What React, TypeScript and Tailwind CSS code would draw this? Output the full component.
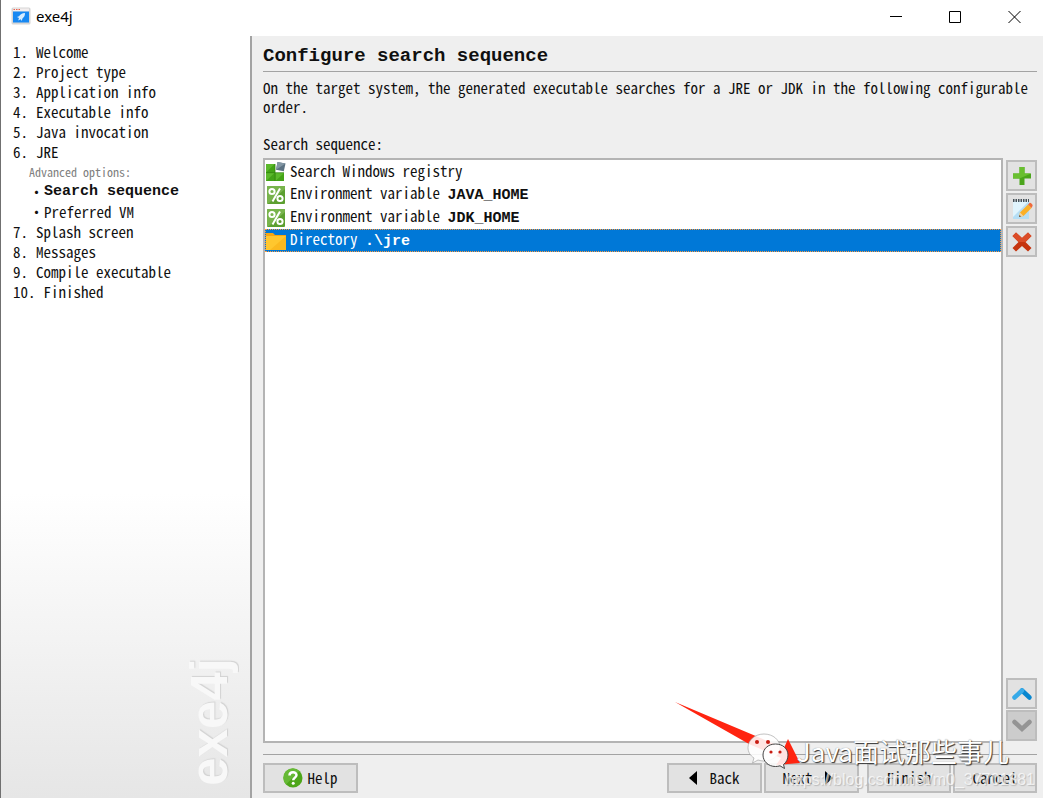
import type { ReactNode } from "react";

const bold = "font-['Liberation_Mono',monospace] font-bold";

const steps = [
  "Welcome",
  "Project type",
  "Application info",
  "Executable info",
  "Java invocation",
  "JRE",
  "Splash screen",
  "Messages",
  "Compile executable",
  "Finished",
];

function AppIcon() {
  return (
    <svg viewBox="0 0 20 18" className="h-[18px] w-5" aria-hidden="true">
      <rect x="0.5" y="0.5" width="19" height="17" rx="1.5" fill="#d6d6d6" />
      <rect x="2" y="1.500" width="16" height="3" fill="#f3eeee" />
      <path d="M2.500 2.500h1.500M5 2.500h1.500M7.500 2.500h1.500" stroke="#e8604c" strokeWidth="1.200" />
      <rect x="2" y="4.500" width="16" height="11" fill="#1788f2" />
      <path d="M14 6c-3 .2-4.700 1.200-6 3.300l-2 .7 2 1-.8 2.500 2.500-1.200 1 1.700.8-2.500c1.800-1.500 2.500-3 2.500-5.500z" fill="#d5ecff" />
    </svg>
  );
}

function RegistryIcon() {
  return (
    <svg viewBox="0 0 20 20" className="size-5" aria-hidden="true">
      <path d="M0 2h9v9h9v8H0z" fill="#43a317" />
      <path d="M0 2h8.500L0 10.500zM0 11h8.500L0 19zM9.500 11H18l-8.500 8z" fill="#5cb92c" />
      <path d="M9 2v17M0 10.700h18" stroke="#32850f" strokeWidth="0.800" />
      <path d="M11.500 0l8 1.500-1.700 7.800-7.800-1.600z" fill="#5c7282" />
      <path d="M11.500 0l8 1.500-9.500 6.200z" fill="#8296a4" />
    </svg>
  );
}

function PercentIcon() {
  return (
    <svg viewBox="0 0 20 20" className="size-5" aria-hidden="true">
      <rect x="1" y="1" width="18" height="18" rx="1" fill="#5c9f30" />
      <path d="M2 1h17v3L3 18H1V2z" fill="#78b44c" />
      <circle cx="6" cy="6.500" r="2.600" fill="none" stroke="#fff" strokeWidth="2" />
      <circle cx="14" cy="13.500" r="2.600" fill="none" stroke="#fff" strokeWidth="2" />
      <path d="M14 3.500L6.500 16.500" stroke="#fff" strokeWidth="2" />
    </svg>
  );
}

function FolderIcon() {
  return (
    <svg viewBox="0 0 20 20" className="size-5" aria-hidden="true">
      <path d="M0 2h7l2 2h11v15H0z" fill="#f5a612" />
      <path d="M0 5h20v14H0z" fill="#ffc72e" />
      <path d="M20 5v14H4z" fill="#fbb91f" />
    </svg>
  );
}

function PlusIcon() {
  return (
    <svg viewBox="0 0 20 20" className="size-5" aria-hidden="true">
      <path d="M7.500 1h5v6.500H19v5h-6.500V19h-5v-6.500H1v-5h6.500z" fill="#4ba51c" />
      <path d="M7.500 1h5v6.500H19L7.500 12.500H1v-5h6.500z" fill="#69bf30" />
    </svg>
  );
}

function EditIcon() {
  return (
    <svg viewBox="0 0 22 22" className="size-[22px]" aria-hidden="true">
      <path d="M2 3h16v18H2z" fill="#b5def5" />
      <path d="M2 3h16L2 19z" fill="#e0f4fd" />
      <path d="M2 2.500h16" stroke="#46525a" strokeWidth="3" strokeDasharray="1.500 1" />
      <path d="M8 19l1-4.500L17 6.500l3.500 3.500-8 8z" fill="#fbb028" />
      <path d="M8 19l1-4.500 3.500 3.500z" fill="#f2d4a4" />
      <path d="M17 6.500l1.500-1.500c1-.8 3.800 1.800 3 3L20.500 10z" fill="#ef6a3c" />
      <path d="M8 19l.5-2 1.500 1.500z" fill="#4b4038" />
    </svg>
  );
}

function DeleteIcon() {
  return (
    <svg viewBox="0 0 22 22" className="size-[22px]" aria-hidden="true">
      <path d="M5 1.500l6 5.500 6-5.500L20.500 5l-6 6 6 6-3.500 3.500-6-5.500-6 5.500L1.500 17l6-6-6-6z" fill="#c5340f" />
      <path d="M5 1.500l6 5.500 6-5.500L20.500 5l-6 6H7.500l-6-6z" fill="#db4c27" />
    </svg>
  );
}

function ChevronUp() {
  return (
    <svg viewBox="0 0 22 14" className="h-3.5 w-[22px]" aria-hidden="true">
      <path d="M11 3.500l7.500 7" stroke="#0786cf" strokeWidth="4.500" strokeLinecap="round" />
      <path d="M3.500 10.500l7.500-7" stroke="#37aae8" strokeWidth="4.500" strokeLinecap="round" />
    </svg>
  );
}

function ChevronDown() {
  return (
    <svg viewBox="0 0 22 14" className="h-3.5 w-[22px]" aria-hidden="true">
      <path d="M3.500 3l7.500 7 7.500-7" stroke="#949494" strokeWidth="4.500" strokeLinecap="round" fill="none" />
    </svg>
  );
}

function HelpIcon() {
  return (
    <svg viewBox="0 0 20 20" className="size-5" aria-hidden="true">
      <circle cx="10" cy="10" r="9.500" fill="#4da619" />
      <path d="M3 16.500A9.500 9.500 0 0 1 16.500 3z" fill="#66b935" />
      <path d="M6.500 7.500c0-4.500 7-4.300 7-.4 0 2.400-3.300 2.700-3.300 5.200" stroke="#fff" strokeWidth="2.500" fill="none" />
      <circle cx="10.200" cy="15.300" r="1.500" fill="#fff" />
    </svg>
  );
}

function ToolButton({ label, disabled, children }: { label: string; disabled?: boolean; children: ReactNode }) {
  return (
    <button
      aria-label={label}
      disabled={disabled}
      className="flex size-[31px] items-center justify-center border-2 border-[#bdbdbd] bg-[#e2e2e2] disabled:bg-[#cccccc]"
    >
      {children}
    </button>
  );
}

function FooterButton({ width, children }: { width: string; children: ReactNode }) {
  return (
    <button className={`flex h-[30px] items-center justify-center border-2 border-[#bdbdbd] bg-[#e2e2e2] ${width}`}>
      {children}
    </button>
  );
}

function Step({ index }: { index: number }) {
  return (
    <li>
      <a href="#" className="flex gap-2">
        <span>{index + 1}.</span>
        <span>{steps[index]}</span>
      </a>
    </li>
  );
}

function Sidebar() {
  return (
    <nav
      aria-label="Wizard steps"
      className="relative w-[251px] shrink-0 border-r-2 border-[#a3a3a3] bg-linear-to-b from-white from-60% to-[#e6e6e6] pt-1.5 pl-3"
    >
      <ol className="leading-5">
        {[0, 1, 2, 3, 4, 5].map((i) => (
          <Step key={i} index={i} />
        ))}
        <li className="pl-4">
          <p className="text-[12px] leading-5 text-[#808080]">Advanced options:</p>
          <ul>
            <li>
              <a href="#" aria-current="step" className="flex">
                <span>·</span>
                <span className={bold}>Search sequence</span>
              </a>
            </li>
            <li>
              <a href="#" className="flex">
                <span>·</span>
                <span>Preferred VM</span>
              </a>
            </li>
          </ul>
        </li>
        {[6, 7, 8, 9].map((i) => (
          <Step key={i} index={i} />
        ))}
      </ol>
      <span className="absolute right-4 bottom-3 rotate-180 font-['Liberation_Sans',sans-serif] text-[51px] leading-[48px] font-bold text-[#f8f8f8] [text-shadow:1px_1px_1px_#d2d2d2] [writing-mode:vertical-rl]">
        exe4j
      </span>
    </nav>
  );
}

function SearchList() {
  return (
    <ul
      role="listbox"
      aria-labelledby="sequence-label"
      className="flex-1 border-2 border-[#b4b4b4] bg-white"
    >
      <li role="option" aria-selected="false" className="flex h-[23px] items-center gap-1 pl-px">
        <RegistryIcon />
        <span>Search Windows registry</span>
      </li>
      <li role="option" aria-selected="false" className="flex h-[23px] items-center gap-1 pl-px">
        <PercentIcon />
        <span>
          Environment variable <b className={bold}>JAVA_HOME</b>
        </span>
      </li>
      <li role="option" aria-selected="false" className="flex h-[23px] items-center gap-1 pl-px">
        <PercentIcon />
        <span>
          Environment variable <b className={bold}>JDK_HOME</b>
        </span>
      </li>
      <li
        role="option"
        aria-selected="true"
        className="flex h-[23px] items-center gap-1 border border-dotted border-[#ff9a3c] bg-[#0078d7] text-white"
      >
        <FolderIcon />
        <span>
          Directory <b className={bold}>.\jre</b>
        </span>
      </li>
    </ul>
  );
}

function Watermark() {
  return (
    <div className="pointer-events-none absolute inset-0 overflow-hidden">
      <svg viewBox="0 0 130 66" className="absolute right-[239px] bottom-[30px] h-[66px] w-[130px]" aria-hidden="true">
        <path d="M1 0L110 46l4-9 12 24-24 2 5-7L75 42z" fill="#ff2410" />
      </svg>
      <svg viewBox="0 0 44 38" className="absolute right-[252px] bottom-[28px] h-[38px] w-11" aria-hidden="true">
        <path
          d="M17 2C8 2 1 8 1 15.500c0 4.500 2.200 8 6 10.500l-1.500 5 5.500-3c2 .7 4 1 6 1 9 0 16-6 16-13.500S26 2 17 2z"
          fill="#fff"
          fillOpacity="0.880"
          stroke="#999"
          strokeWidth="0.600"
        />
        <path
          d="M28.500 12C21 12 16 17 16 23s5 11.500 12.500 11.500c1.500 0 3-.2 4.500-.7l4.500 2.700-1-4c2.800-2 4.500-5.500 4.500-9.500 0-6-5-11-12.500-11z"
          fill="#fff"
          fillOpacity="0.880"
          stroke="#444"
          strokeWidth="1"
        />
        <g fill="#c81c12">
          <circle cx="10" cy="10" r="2" />
          <circle cx="21" cy="10" r="2" />
          <circle cx="24" cy="20" r="1.600" />
          <circle cx="33" cy="20" r="1.600" />
        </g>
      </svg>
      <span className="absolute right-[34px] bottom-[27px] font-['Noto_Sans_CJK_SC',sans-serif] text-[26px] leading-10 whitespace-nowrap text-white [text-shadow:1px_1px_1px_#333,0_0_1px_#777]">
        Java面试那些事儿
      </span>
      <span className="absolute right-2 bottom-2 font-['Liberation_Sans',sans-serif] text-base leading-5 whitespace-nowrap text-white/70 [text-shadow:1px_1px_1px_#bbb]">
        https://blog.csdn.net/m0_37701381
      </span>
    </div>
  );
}

export default function App() {
  return (
    <div className="relative flex min-h-screen flex-col border-l border-[#707070] bg-[#efefef] font-['Noto_Sans_Mono_CJK_SC','Liberation_Mono',monospace] text-[15px] text-[#101010]">
      <header className="flex h-9 items-center justify-between bg-white pr-[22px] pb-1 pl-2.5">
        <div className="flex items-center gap-[5px] font-['Noto_Sans',sans-serif] text-[15px] text-black">
          <AppIcon />
          <h1>exe4j</h1>
        </div>
        <div className="flex gap-[46px]">
          <button aria-label="Minimize">
            <svg viewBox="0 0 13 13" className="size-[13px]" aria-hidden="true">
              <path d="M0 6.500h12" stroke="#000" />
            </svg>
          </button>
          <button aria-label="Maximize">
            <svg viewBox="0 0 13 13" className="size-[13px]" aria-hidden="true">
              <path d="M.5 1.500h11v11H.5z" stroke="#000" fill="none" />
            </svg>
          </button>
          <button aria-label="Close">
            <svg viewBox="0 0 13 13" className="size-[13px]" aria-hidden="true">
              <path d="M.5 1l12 12M12.500 1l-12 12" stroke="#000" />
            </svg>
          </button>
        </div>
      </header>

      <div className="flex flex-1">
        <Sidebar />
        <main className="flex min-w-0 flex-1 flex-col pr-1.5 pb-[5px] pl-[11px]">
          <h2 className={`${bold} border-b border-[#a3a3a3] pt-1.5 pb-px text-[19px] leading-7`}>
            Configure search sequence
          </h2>
          <p className="pt-1.5 leading-[19px]">
            On the target system, the generated executable searches for a JRE or JDK in the following configurable
            order.
          </p>
          <p id="sequence-label" className="pt-[18px] pb-1 leading-5">
            Search sequence:
          </p>
          <div className="flex flex-1 gap-[3px]">
            <SearchList />
            <div className="flex flex-col justify-between pt-0.5 pb-0.5">
              <div className="flex flex-col gap-0.5">
                <ToolButton label="Add"><PlusIcon /></ToolButton>
                <ToolButton label="Edit"><EditIcon /></ToolButton>
                <ToolButton label="Delete"><DeleteIcon /></ToolButton>
              </div>
              <div className="flex flex-col gap-px">
                <ToolButton label="Move up"><ChevronUp /></ToolButton>
                <ToolButton label="Move down" disabled><ChevronDown /></ToolButton>
              </div>
            </div>
          </div>
          <footer className="mt-[11px] flex border-t border-[#a3a3a3] pt-2">
            <FooterButton width="w-[95px]">
              <span className="flex items-center gap-1">
                <HelpIcon />
                Help
              </span>
            </FooterButton>
            <div className="ml-auto flex gap-0.5">
              <FooterButton width="w-[95px]">
                <span className="flex items-center gap-3">
                  <svg viewBox="0 0 8 14" className="h-3.5 w-2" aria-hidden="true">
                    <path d="M8 0v14L0 7z" fill="#000" />
                  </svg>
                  Back
                </span>
              </FooterButton>
              <FooterButton width="w-[95px]">
                <span className="flex items-center gap-3 pr-2">
                  Next
                  <svg viewBox="0 0 8 14" className="h-3.5 w-2" aria-hidden="true">
                    <path d="M0 0v14l8-7z" fill="#000" />
                  </svg>
                </span>
              </FooterButton>
            </div>
            <div className="ml-2 flex gap-0.5">
              <FooterButton width="w-[84px]">Finish</FooterButton>
              <FooterButton width="w-[84px]">Cancel</FooterButton>
            </div>
          </footer>
        </main>
      </div>
      <Watermark />
    </div>
  );
}
